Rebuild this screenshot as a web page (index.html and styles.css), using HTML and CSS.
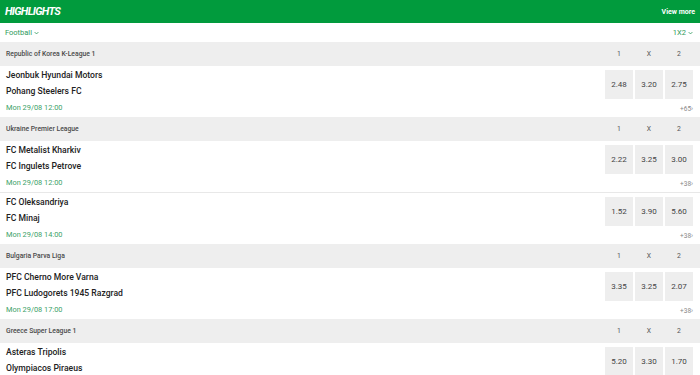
FILE: index.html
```html
<!DOCTYPE html>
<html>
<head>
<meta charset="utf-8">
<link rel="stylesheet" href="styles.css">
</head>
<body>
<div class="top">
  <span class="title">HIGHLIGHTS</span>
  <span class="viewmore">View more</span>
</div>
<div class="filter">
  <span class="sel">Football <svg class="chev" viewBox="0 0 8 5" width="5" height="4"><path d="M1 1l3 3 3-3" fill="none" stroke="currentColor" stroke-width="1.3"/></svg></span>
  <span class="sel">1X2 <svg class="chev" viewBox="0 0 8 5" width="5" height="4"><path d="M1 1l3 3 3-3" fill="none" stroke="currentColor" stroke-width="1.3"/></svg></span>
</div>

<div class="league">
  <span class="lname">Republic of Korea K-League 1</span>
  <div class="cols"><span>1</span><span>X</span><span>2</span></div>
</div>
<div class="match">
  <div class="info">
    <div class="team">Jeonbuk Hyundai Motors</div>
    <div class="team">Pohang Steelers FC</div>
    <div class="date">Mon 29/08 12:00</div>
  </div>
  <div class="side">
    <div class="odds"><span>2.48</span><span>3.20</span><span>2.75</span></div>
    <div class="more">+65&rsaquo;</div>
  </div>
</div>

<div class="league">
  <span class="lname">Ukraine Premier League</span>
  <div class="cols"><span>1</span><span>X</span><span>2</span></div>
</div>
<div class="match">
  <div class="info">
    <div class="team">FC Metalist Kharkiv</div>
    <div class="team">FC Ingulets Petrove</div>
    <div class="date">Mon 29/08 12:00</div>
  </div>
  <div class="side">
    <div class="odds"><span>2.22</span><span>3.25</span><span>3.00</span></div>
    <div class="more">+38&rsaquo;</div>
  </div>
</div>
<div class="match">
  <div class="info">
    <div class="team">FC Oleksandriya</div>
    <div class="team">FC Minaj</div>
    <div class="date">Mon 29/08 14:00</div>
  </div>
  <div class="side">
    <div class="odds"><span>1.52</span><span>3.90</span><span>5.60</span></div>
    <div class="more">+38&rsaquo;</div>
  </div>
</div>

<div class="league">
  <span class="lname">Bulgaria Parva Liga</span>
  <div class="cols"><span>1</span><span>X</span><span>2</span></div>
</div>
<div class="match">
  <div class="info">
    <div class="team">PFC Cherno More Varna</div>
    <div class="team">PFC Ludogorets 1945 Razgrad</div>
    <div class="date">Mon 29/08 17:00</div>
  </div>
  <div class="side">
    <div class="odds"><span>3.35</span><span>3.25</span><span>2.07</span></div>
    <div class="more">+38&rsaquo;</div>
  </div>
</div>

<div class="league">
  <span class="lname">Greece Super League 1</span>
  <div class="cols"><span>1</span><span>X</span><span>2</span></div>
</div>
<div class="match">
  <div class="info">
    <div class="team">Asteras Tripolis</div>
    <div class="team">Olympiacos Piraeus</div>
    <div class="date">Mon 29/08 17:00</div>
  </div>
  <div class="side">
    <div class="odds"><span>5.20</span><span>3.30</span><span>1.70</span></div>
    <div class="more">+38&rsaquo;</div>
  </div>
</div>
</body>
</html>
```
FILE: styles.css
```css
html, body {
  margin: 0;
  padding: 0;
  background: #ffffff;
  font-family: Roboto, "Liberation Sans", sans-serif;
  overflow: hidden;
}
.top {
  height: 23px;
  background: #019b3d;
  display: flex;
  align-items: center;
  justify-content: space-between;
  padding: 0 5px 0 5px;
  color: #ffffff;
}
.title {
  font-size: 11px;
  font-weight: 700;
  font-style: italic;
  letter-spacing: -0.7px;
}
.viewmore {
  font-size: 7px;
  font-weight: 700;
}
.filter {
  height: 19px;
  display: flex;
  align-items: center;
  justify-content: space-between;
  padding: 0 7px 0 5px;
  color: #2e9a5b;
  font-size: 7.5px;
}
.sel {
  display: flex;
  align-items: center;
  gap: 2px;
}
.chev {
  display: block;
}
.league {
  height: 24px;
  background: #eeeeee;
  display: flex;
  align-items: center;
  justify-content: space-between;
  padding: 0 7px 0 6px;
  color: #4a4a4a;
  font-size: 6.8px;
  font-weight: 500;
}
.cols {
  display: flex;
  gap: 2px;
  font-weight: 400;
  color: #555555;
}
.cols span {
  width: 28px;
  text-align: center;
}
.match {
  height: 51px;
  display: flex;
  justify-content: space-between;
  padding: 0 7px 0 6px;
}
.match + .match {
  border-top: 1px solid #e8e8e8;
}
.info {
  padding-top: 1px;
}
.team {
  font-size: 8.6px;
  font-weight: 500;
  line-height: 16px;
  color: #222222;
}
.date {
  margin-top: 2px;
  font-size: 7.4px;
  line-height: 14px;
  color: #3d9f68;
}
.side {
  padding-top: 4px;
  display: flex;
  flex-direction: column;
  align-items: flex-end;
}
.odds {
  display: flex;
  gap: 2px;
}
.odds span {
  width: 28px;
  height: 29px;
  background: #eeeeee;
  display: flex;
  align-items: center;
  justify-content: center;
  font-size: 8px;
  color: #444444;
}
.more {
  margin-top: 4px;
  font-size: 6.5px;
  line-height: 12px;
  color: #888888;
}
```
